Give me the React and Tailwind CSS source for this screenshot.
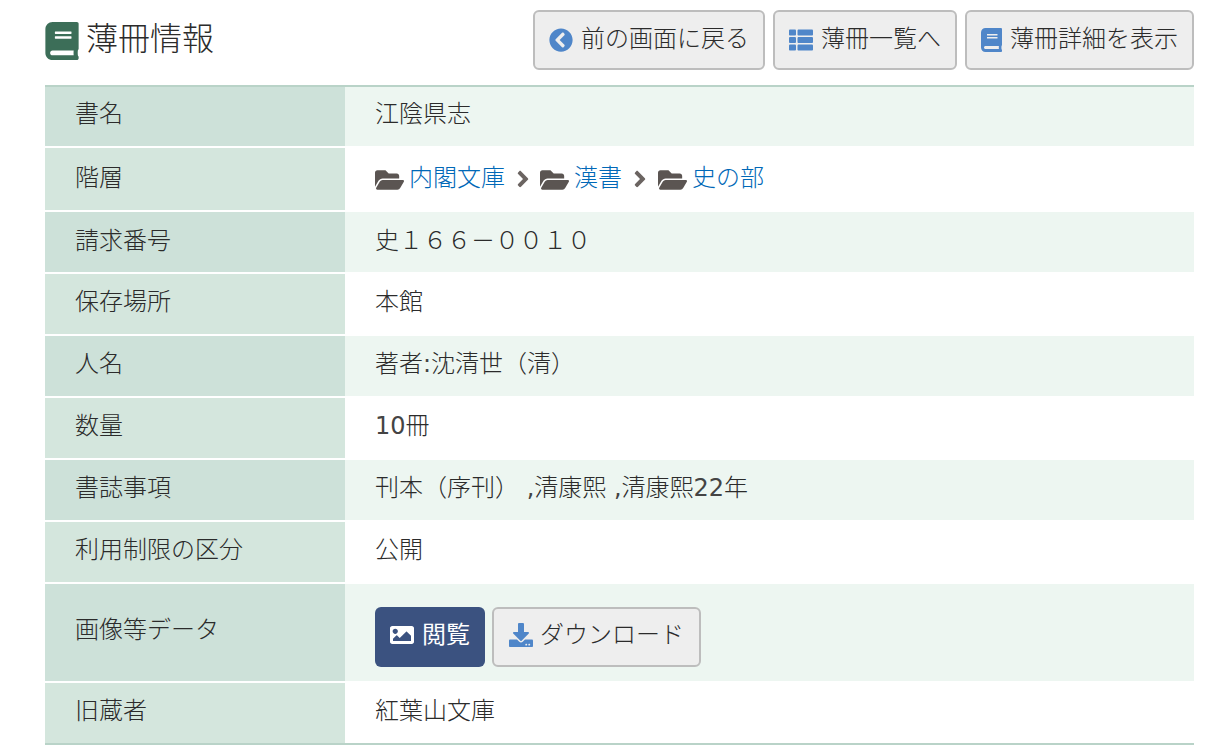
import { FaBook, FaChevronCircleLeft, FaThList, FaFolderOpen, FaAngleRight, FaImage, FaDownload } from "react-icons/fa";

const FONT = "font-['DejaVu_Sans','Noto_Sans_CJK_JP',sans-serif]";

const Btn = ({ icon, label, className = "", textClass = "pb-[2px]" }) => (
  <a className={`flex items-center h-[60px] rounded-md border-2 border-[#bdbdbd] bg-[#eeeeee] text-[#2b2b2b] text-[24px] font-light ${className}`}>
    {icon}
    <span className={textClass}>{label}</span>
  </a>
);

const Row = ({ title, height, alt, align = "pt-[10px]", cellAlign, children }) => (
  <div className={`flex ${height}`}>
    <div className={`w-[300px] pl-[30px] text-[24px] font-light leading-[36px] ${align} ${alt ? "bg-[#cde1d9]" : "bg-[#d4e6dd]"}`}>
      {title}
    </div>
    <div className={`flex-1 pl-[30px] text-[24px] font-light leading-[36px] ${cellAlign || align} ${alt ? "bg-[#edf6f1]" : "bg-white"}`}>
      {children}
    </div>
  </div>
);

const Folder = ({ name }) => (
  <span className="flex items-center">
    <FaFolderOpen className="text-[#5b5552] w-[29px] h-[26px] mr-[5px] mt-[3px]" />
    <a className="text-[#0068b7]">{name}</a>
  </span>
);

const Sep = ({ className = "mr-[7px]" }) => <FaAngleRight className={`text-[#6b6461] w-[20px] h-[26px] ml-[8px] mt-[1px] ${className}`} />;

const Latin = ({ children }) => <span className="font-normal text-[#444]">{children}</span>;

export default function App() {
  return (
    <div className={`${FONT} w-[1223px] h-[747px] overflow-hidden bg-white text-[#2b2b2b] pl-[45px] pr-[29px] pt-[10px]`}>
      <div className="flex justify-between h-[75px]">
        <h2 className="flex items-start pt-[9px] text-[32px] font-light leading-[40px]">
          <FaBook className="text-[#3c6e58] w-[34px] h-[38px] mt-[3px] mr-[7px]" />
          薄冊情報
        </h2>
        <div className="flex gap-[8px]">
          <Btn className="pl-[14px] pr-[14px]" icon={<FaChevronCircleLeft className="text-[#4f86c9] w-[24px] h-[24px] mr-[8px]" />} label="前の画面に戻る" />
          <Btn className="pl-[14px] pr-[14px]" icon={<FaThList className="text-[#4f86c9] w-[24px] h-[24px] mr-[8px]" />} label="薄冊一覧へ" />
          <Btn className="pl-[14px] pr-[14px]" icon={<FaBook className="text-[#4f86c9] w-[21px] h-[24px] mr-[8px]" />} label="薄冊詳細を表示" />
        </div>
      </div>

      <div className="flex flex-col gap-[2px] border-y-2 border-[#b9d3c8]">
        <Row title="書名" height="h-[59px]" alt align="pt-[9px]">江陰県志</Row>
        <Row title="階層" height="h-[62px]" align="pt-[12px]">
          <div className="flex items-center">
            <Folder name="内閣文庫" />
            <Sep />
            <Folder name="漢書" />
            <Sep className="mr-[8px]" />
            <Folder name="史の部" />
          </div>
        </Row>
        <Row title="請求番号" height="h-[60px]" alt align="pt-[11px]">史１６６－００１０</Row>
        <Row title="保存場所" height="h-[60px]">本館</Row>
        <Row title="人名" height="h-[60px]" alt>著者<Latin>:</Latin>沈清世（清）</Row>
        <Row title="数量" height="h-[60px]"><Latin>10</Latin>冊</Row>
        <Row title="書誌事項" height="h-[60px]" alt>刊本（序刊）<Latin> ,</Latin>清康熙<Latin> ,</Latin>清康熙<Latin>22</Latin>年</Row>
        <Row title="利用制限の区分" height="h-[60px]">公開</Row>
        <Row title="画像等データ" height="h-[97px]" alt align="pt-[28px]" cellAlign="pt-[23px]">
          <div className="flex gap-[7px]">
            <a className="flex items-center justify-center w-[110px] h-[60px] rounded-md bg-[#3b5280] text-white text-[24px] font-normal">
              <FaImage className="w-[24px] h-[24px] mr-[8px] -mt-[4px]" />
              <span className="pb-[4px]">閲覧</span>
            </a>
            <Btn className="pl-[15px] pr-[15px]" textClass="pb-[4px]" icon={<FaDownload className="text-[#4f86c9] w-[24px] h-[24px] mr-[7px] -mt-[4px]" />} label="ダウンロード" />
          </div>
        </Row>
        <Row title="旧蔵者" height="h-[60px]">紅葉山文庫</Row>
      </div>
    </div>
  );
}
